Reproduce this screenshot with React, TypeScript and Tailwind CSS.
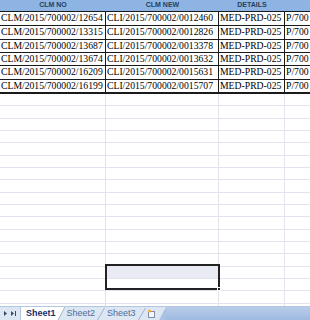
import React from "react";

const rows = [
  ["CLM/2015/700002/12654", "CLI/2015/700002/0012460"],
  ["CLM/2015/700002/13315", "CLI/2015/700002/0012826"],
  ["CLM/2015/700002/13687", "CLI/2015/700002/0013378"],
  ["CLM/2015/700002/13674", "CLI/2015/700002/0013632"],
  ["CLM/2015/700002/16209", "CLI/2015/700002/0015631"],
  ["CLM/2015/700002/16199", "CLI/2015/700002/0015707"],
];

const emptyRows = Array.from({ length: 18 });

function Slant() {
  return (
    <svg width="8" height="14" viewBox="0 0 8 14" className="shrink-0">
      <line x1="0.5" y1="13" x2="7.5" y2="1" stroke="#9fb3cf" strokeWidth="1" />
    </svg>
  );
}

export default function App() {
  return (
    <div className="relative w-[310px] h-[320px] overflow-hidden bg-white flex flex-col">
      <div className="flex-1 overflow-hidden flex flex-col">
        {/* header */}
        <div className="grid grid-cols-[106px_113px_66px_1fr] h-[11px] shrink-0 bg-[#8eb4e3] text-[#243f60] font-bold text-[7px] leading-[10px] [font-family:'Liberation_Sans',sans-serif]">
          <div className="text-center">CLM NO</div>
          <div className="text-center">CLM NEW</div>
          <div className="text-center">DETAILS</div>
          <div />
        </div>
        {/* data */}
        <div className="border-t border-[#1a1a1a] border-b-2 shrink-0 [font-family:'Liberation_Serif',serif] text-[9.7px] text-black">
          {rows.map((r, i) => (
            <div
              key={i}
              className={
                "grid grid-cols-[106px_113px_66px_1fr] h-[13.33px] leading-[12px] " +
                (i > 0 ? "border-t border-[#1a1a1a]" : "")
              }
            >
              <div className="border-r border-[#1a1a1a] pl-[1px] whitespace-nowrap overflow-hidden">{r[0]}</div>
              <div className="border-r border-[#1a1a1a] pl-[1px] whitespace-nowrap overflow-hidden">{r[1]}</div>
              <div className="border-r border-[#1a1a1a] pl-[1px] whitespace-nowrap overflow-hidden">MED-PRD-025</div>
              <div className="pl-[1px] whitespace-nowrap overflow-hidden">P/700</div>
            </div>
          ))}
        </div>
        {/* empty grid */}
        <div className="flex flex-col">
          {emptyRows.map((_, i) => (
            <div key={i} className="grid grid-cols-[106px_113px_66px_1fr] h-[12.33px] border-b border-[#e2e3ee] shrink-0">
              <div className="border-r border-[#e2e3ee]" />
              <div className="border-r border-[#e2e3ee]" />
              <div className="border-r border-[#e2e3ee]" />
              <div />
            </div>
          ))}
        </div>
      </div>

      {/* selection */}
      <div className="absolute left-[105px] top-[264px] w-[115px] h-[26px] border-2 border-[#222]">
        <div className="h-[12px] bg-[#e8eaf4]" />
        <div className="absolute -right-[3px] -bottom-[3px] w-[4px] h-[4px] bg-[#222] border border-white" />
      </div>

      {/* sheet tabs */}
      <div className="h-[14px] shrink-0 flex items-stretch bg-[#dde7f4] border-t border-[#b4c6df] [font-family:'Liberation_Sans',sans-serif] text-[9px] leading-[13px]">
        <div className="w-[21px] flex items-center justify-center gap-[4px] border-r border-[#b4c6df]">
          <svg width="3" height="5" viewBox="0 0 3 5"><path d="M0 0 L3 2.5 L0 5Z" fill="#3a4a63" /></svg>
          <svg width="5" height="5" viewBox="0 0 5 5"><path d="M0 0 L3 2.5 L0 5Z" fill="#3a4a63" /><rect x="4" y="0" width="1" height="5" fill="#3a4a63" /></svg>
        </div>
        <div className="bg-white pl-[5px] pr-[1px] font-bold text-[#15306b]">Sheet1</div>
        <svg width="8" height="13" viewBox="0 0 8 13" className="shrink-0">
          <path d="M0 0 L0 13 L1 13 L8 0Z" fill="#ffffff" />
          <line x1="1" y1="13" x2="8" y2="0" stroke="#9fb3cf" strokeWidth="1" />
        </svg>
        <div className="px-[2px] text-[#4d6c9a]">Sheet2</div>
        <Slant />
        <div className="px-[2px] text-[#4d6c9a]">Sheet3</div>
        <Slant />
        <div className="w-[12px] flex items-center justify-center">
          <svg width="9" height="9" viewBox="0 0 9 9">
            <rect x="1.5" y="2.5" width="6" height="6" fill="#f4f6fa" stroke="#7f8fa8" strokeWidth="1" />
            <circle cx="2.5" cy="2" r="1.6" fill="#f2b33d" />
          </svg>
        </div>
        <svg width="8" height="13" viewBox="0 0 8 13" className="shrink-0">
          <path d="M1 13 L8 0 L8 13Z" fill="#a9c2e4" />
        </svg>
        <div className="flex-1 bg-[linear-gradient(#b9cde9,#9db9e0)]" />
      </div>
    </div>
  );
}
